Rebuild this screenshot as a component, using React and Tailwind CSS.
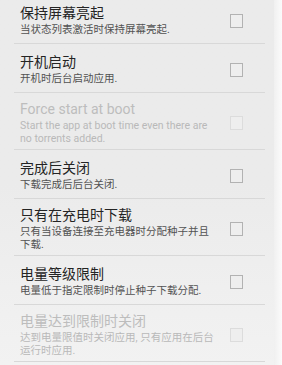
import React from "react";

const items = [
  { title: "保持屏幕亮起", sub: "当状态列表激活时保持屏幕亮起." },
  { title: "开机启动", sub: "开机时后台启动应用." },
  { title: "Force start at boot", sub: "Start the app at boot time even there are no torrents added.", disabled: true },
  { title: "完成后关闭", sub: "下载完成后后台关闭." },
  { title: "只有在充电时下载", sub: "只有当设备连接至充电器时分配种子并且下载." },
  { title: "电量等级限制", sub: "电量低于指定限制时停止种子下载分配." },
  { title: "电量达到限制时关闭", sub: "达到电量限值时关闭应用, 只有应用在后台运行时应用.", disabled: true },
];

function Row({ title, sub, disabled }) {
  return (
    <div className="flex items-center min-h-[49px] pt-[8px] pb-[4px] pl-[6px] border-b border-[#d8d8d8]">
      <div className="flex-1 flex flex-col pr-[12px]">
        <div className={`text-[14px] leading-[16px] ${disabled ? "text-[#bdbdbd]" : "text-[#242424]"}`}>{title}</div>
        <div className={`mt-[3px] text-[10.5px] leading-[12.5px] ${disabled ? "text-[#b9b9b9]" : "text-[#525252]"}`}>{sub}</div>
      </div>
      <div className={`w-[13px] h-[14px] shrink-0 mr-[22px] border ${disabled ? "border-[#dcdcdc] bg-[#eeeeee]" : "border-[#b2b2b2] bg-[#eeeeee]"}`} />
    </div>
  );
}

export default function App() {
  return (
    <div
      className="w-[282px] h-[365px] overflow-hidden flex bg-gradient-to-b from-[#ebebeb] via-[#ebebeb] to-[#f2f2f2]"
      style={{ fontFamily: 'Roboto, "Noto Sans CJK SC", sans-serif' }}
    >
      <div className="w-[274px] shrink-0 pl-[14px] pr-[9px]">
        <div className="-mt-[5px] flex flex-col">
          {items.map((it, i) => (
            <Row key={i} {...it} />
          ))}
        </div>
      </div>
      <div className="flex-1 bg-gradient-to-r from-[#f0f0f0] to-[#fbfbfb]" />
    </div>
  );
}
